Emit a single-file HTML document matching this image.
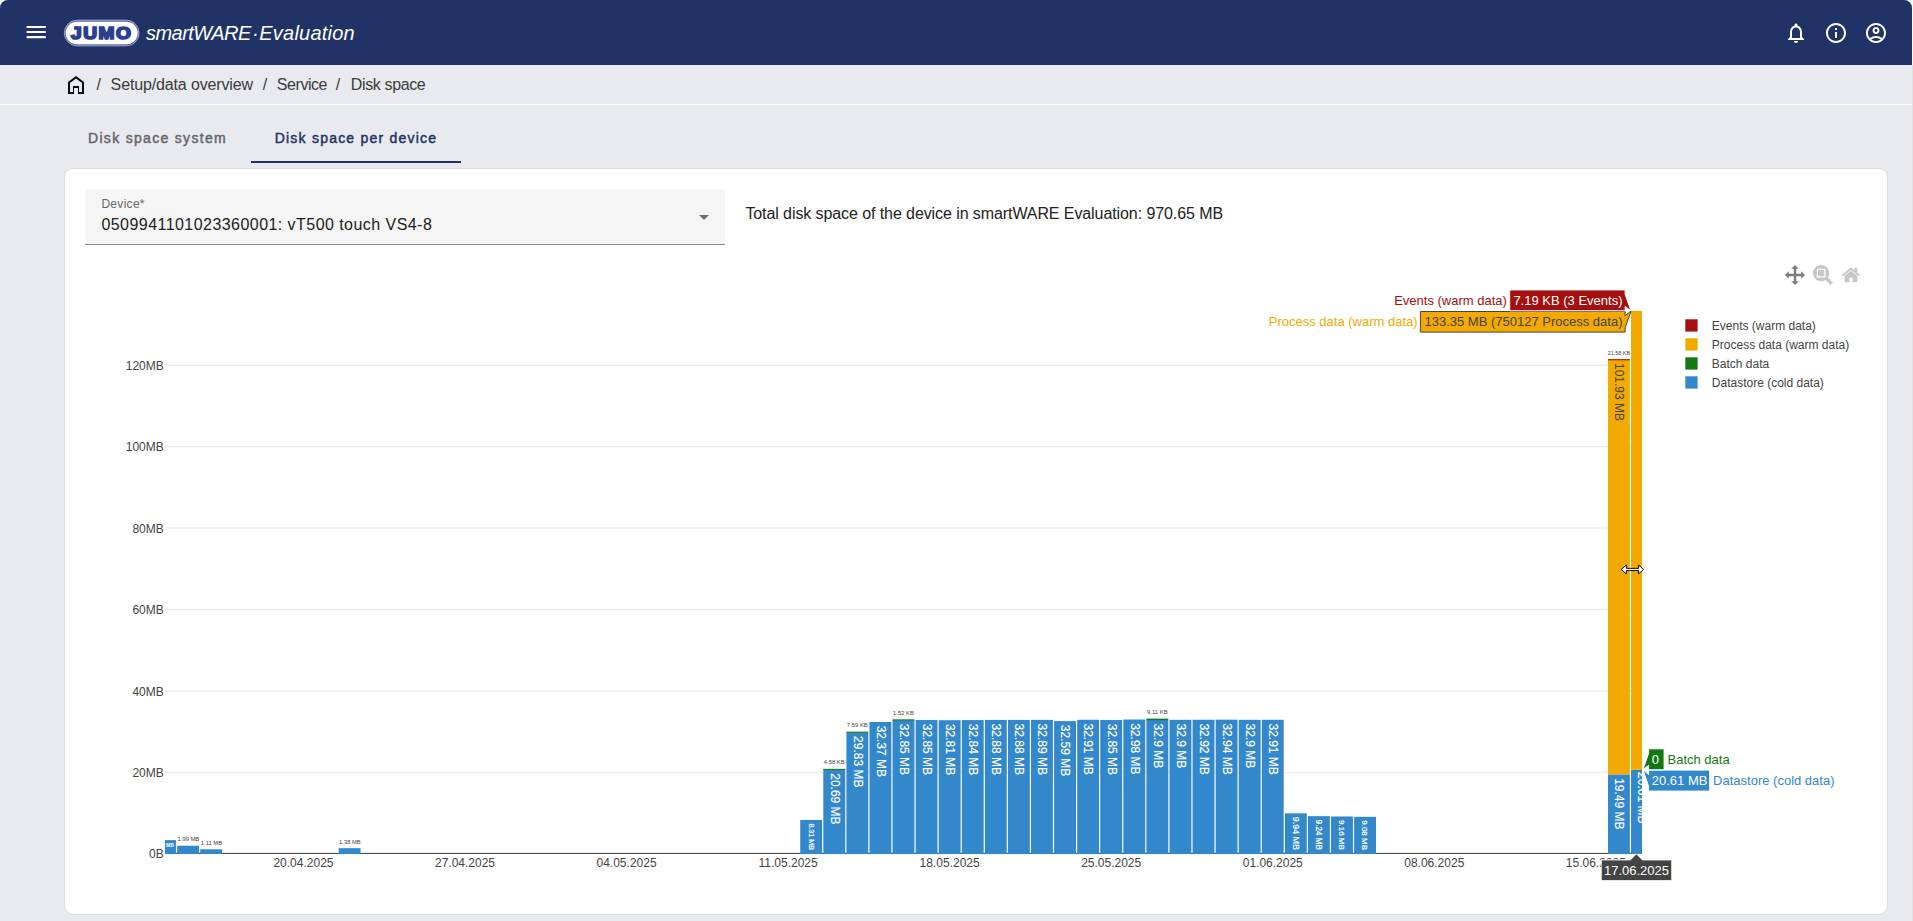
<!DOCTYPE html>
<html lang="en">
<head>
<meta charset="utf-8">
<title>smartWARE Evaluation - Disk space</title>
<style>
  html, body { margin: 0; padding: 0; }
  html { background: #e1e1e1; }
  body {
    width: 1913px; height: 921px; overflow: hidden; position: relative;
    font-family: "Liberation Sans", Arial, sans-serif; color: #222;
    background: linear-gradient(#fafaf8 0, #fafaf8 65px, #e1e1e1 65px);
  }
  #app {
    position: absolute; left: 0; top: 0; width: 1912px; height: 921px;
    background: #e8eaf0; border-radius: 8px 8px 0 0; overflow: hidden;
  }
  .abs { position: absolute; white-space: nowrap; }
  #topbar { position: absolute; left: 0; top: 0; width: 1912px; height: 64.7px; background: #213366; }
  #topbar svg { position: absolute; }
  #crumbs { position: absolute; left: 0; top: 65px; width: 1912px; height: 39px; border-bottom: 1.4px solid #fdfdfe; }
  .crumb { position: absolute; top: 10px; font-size: 16px; line-height: 19px; color: #3b3b3b; white-space: nowrap; transform-origin: 0 50%; }
  .tab { position: absolute; top: 115px; height: 48px; line-height: 47px; font-size: 14px; font-weight: normal; -webkit-text-stroke: 0.45px currentColor; white-space: nowrap; text-align: center; }
  .tab span { display: inline-block; transform-origin: 50% 50%; }
  #card { position: absolute; left: 65px; top: 168.5px; width: 1822.2px; height: 745.6px; background: #fff; border-radius: 8px;
          box-shadow: 0 0 0 0.9px #dcdcdc; }
  #select { position: absolute; left: 85px; top: 189px; width: 640px; height: 55px; background: #f5f5f5; border-radius: 4px 4px 0 0; border-bottom: 1px solid #8c8c8c; }
  svg.chart { position: absolute; left: 65px; top: 169px; }
</style>
</head>
<body>
<div id="app">

  <!-- top bar -->
  <div id="topbar">
    <svg style="left:24px;top:20px" width="24" height="24" viewBox="0 0 24 24"><path fill="#fff" d="M2.600 5.950h19.200v2.100H2.600zM2.600 10.950h19.200v2.100H2.600zM2.600 16.050h19.200v2.100H2.600z"/></svg>
    <!-- JUMO logo -->
    <svg style="left:62px;top:18px" width="80" height="30" viewBox="62 18 80 30">
      <rect x="64.3" y="20.1" width="74.8" height="25.8" rx="12.9" fill="#5a67a6" stroke="#ffffff" stroke-opacity="0.75" stroke-width="0.6"/>
      <rect x="65.7" y="21.7" width="72" height="22.6" rx="11.3" fill="#ffffff"/>
      <g transform="translate(101.7,39.0) scale(1.16,1)"><text id="jumo" x="0" y="0" text-anchor="middle" font-family="'Liberation Sans', Arial, sans-serif" font-weight="bold" font-size="16.5" fill="#2b4091" stroke="#2b4091" stroke-width="1.7" stroke-linejoin="miter" letter-spacing="1.3">JUMO</text></g>
    </svg>
    <div class="abs" id="brand" style="left:146px;top:20.8px;font-size:20px;line-height:24px;font-style:italic;color:#fff;"><span id="b1" style="letter-spacing:-0.54px">smartWARE</span><span id="b2" style="padding:0 0.6px 0 1.2px">·</span><span id="b3" style="letter-spacing:0.23px">Evaluation</span></div>
    <svg style="left:1784px;top:20.5px" width="24" height="24" viewBox="0 0 24 24"><path fill="#fff" d="M12 22c1.1 0 2-.9 2-2h-4c0 1.1.9 2 2 2zm6-6v-5c0-3.07-1.63-5.64-4.5-6.32V4c0-.83-.67-1.500-1.500-1.500s-1.500.67-1.500 1.500v.68C7.640 5.360 6 7.920 6 11v5l-2 2v1h16v-1l-2-2zm-2 1H8v-6c0-2.480 1.510-4.500 4-4.500s4 2.020 4 4.500v6z"/></svg>
    <svg style="left:1824px;top:21px" width="24" height="24" viewBox="0 0 24 24"><path fill="#fff" d="M11 7h2v2h-2zm0 4h2v6h-2zm1-9C6.480 2 2 6.480 2 12s4.480 10 10 10 10-4.480 10-10S17.520 2 12 2zm0 18c-4.410 0-8-3.590-8-8s3.590-8 8-8 8 3.590 8 8-3.590 8-8 8z"/></svg>
    <svg style="left:1864px;top:21px" width="24" height="24" viewBox="0 0 24 24"><path fill="#fff" d="M12 2C6.480 2 2 6.480 2 12s4.480 10 10 10 10-4.480 10-10S17.520 2 12 2zM7.350 18.500C8.660 17.560 10.260 17 12 17s3.340.560 4.650 1.500c-1.310.940-2.910 1.500-4.650 1.500s-3.340-.560-4.650-1.500zm10.790-1.380C16.450 15.800 14.320 15 12 15s-4.450.800-6.140 2.120C4.700 15.730 4 13.950 4 12c0-4.420 3.580-8 8-8s8 3.580 8 8c0 1.950-.700 3.730-1.860 5.120zM12 6c-1.930 0-3.500 1.570-3.500 3.500S10.070 13 12 13s3.500-1.570 3.500-3.500S13.930 6 12 6zm0 5c-.830 0-1.500-.670-1.500-1.500S11.170 8 12 8s1.500.670 1.500 1.500S12.830 11 12 11z"/></svg>
  </div>

  <!-- breadcrumbs -->
  <div id="crumbs">
    <svg style="position:absolute;left:64px;top:7.8px" width="24" height="24" viewBox="0 0 24 24"><path fill="#0a0a0a" d="M6 19h3v-6h6v6h3v-9l-6-4.500L6 10v9zm-2 2V9l8-6 8 6v12h-6v-6h-4v6H4z"/></svg>
    <div class="crumb" style="left:96.4px">/</div>
    <div class="crumb" id="c1" style="left:110.6px;letter-spacing:-0.14px">Setup/data overview</div>
    <div class="crumb" style="left:262.8px">/</div>
    <div class="crumb" id="c2" style="left:276.8px;letter-spacing:-0.44px">Service</div>
    <div class="crumb" style="left:335.8px">/</div>
    <div class="crumb" id="c3" style="left:350.8px;letter-spacing:-0.37px">Disk space</div>
  </div>

  <!-- tabs -->
  <div class="tab" style="left:64px;width:187px;color:#646569;"><span id="t1" style="letter-spacing:1.31px">Disk space system</span></div>
  <div class="tab" style="left:251px;width:210px;color:#213366;"><span id="t2" style="letter-spacing:1.22px">Disk space per device</span></div>
  <div class="abs" style="left:251px;top:161px;width:210px;height:2.1px;background:#213366"></div>

  <!-- card -->
  <div id="card"></div>
  <div id="select">
    <div class="abs" id="lbl" style="left:16.4px;top:8px;font-size:12px;line-height:14px;color:#686868;letter-spacing:0.3px;transform-origin:0 50%">Device*</div>
    <div class="abs" id="val" style="left:16.4px;top:26px;font-size:16px;line-height:19px;color:#212121;letter-spacing:0.45px">0509941101023360001: vT500 touch VS4-8</div>
    <svg style="position:absolute;left:607px;top:16px" width="24" height="24" viewBox="0 0 24 24"><path fill="#707070" d="M7 10l5 5 5-5z"/></svg>
  </div>
  <div class="abs" id="total" style="left:745.4px;top:204px;font-size:16px;line-height:19px;color:#222;letter-spacing:-0.086px">Total disk space of the device in smartWARE Evaluation: 970.65 MB</div>

<svg class="chart" width="1822" height="745" viewBox="65 169 1822 745" font-family="'Liberation Sans', Arial, sans-serif">
<defs><clipPath id="plotclip"><rect x="165.0" y="311.1" width="1477.0" height="542.9"/></clipPath></defs>
<rect x="165.0" y="771.61" width="1477.0" height="1.5" fill="#ececec"/>
<rect x="165.0" y="690.17" width="1477.0" height="1.5" fill="#ececec"/>
<rect x="165.0" y="608.73" width="1477.0" height="1.5" fill="#ececec"/>
<rect x="165.0" y="527.29" width="1477.0" height="1.5" fill="#ececec"/>
<rect x="165.0" y="445.85" width="1477.0" height="1.5" fill="#ececec"/>
<rect x="165.0" y="364.41" width="1477.0" height="1.5" fill="#ececec"/>
<rect x="165.0" y="852.9" width="1477.0" height="1.05" fill="#444444"/>
<g clip-path="url(#plotclip)">
<rect x="154.05" y="840.12" width="21.90" height="13.88" fill="#3388cc"/>
<rect x="177.13" y="845.70" width="21.90" height="8.30" fill="#3388cc"/>
<rect x="200.21" y="849.28" width="21.90" height="4.72" fill="#3388cc"/>
<rect x="338.67" y="848.18" width="21.90" height="5.82" fill="#3388cc"/>
<rect x="800.23" y="819.96" width="21.90" height="34.04" fill="#3388cc"/>
<rect x="823.31" y="769.55" width="21.90" height="84.45" fill="#3388cc"/>
<rect x="823.31" y="768.85" width="21.90" height="1.1" fill="#147814"/>
<rect x="846.39" y="732.33" width="21.90" height="121.67" fill="#3388cc"/>
<rect x="846.39" y="731.63" width="21.90" height="1.1" fill="#147814"/>
<rect x="869.47" y="721.99" width="21.90" height="132.01" fill="#3388cc"/>
<rect x="892.55" y="720.03" width="21.90" height="133.97" fill="#3388cc"/>
<rect x="892.55" y="719.33" width="21.90" height="1.1" fill="#147814"/>
<rect x="915.62" y="720.03" width="21.90" height="133.97" fill="#3388cc"/>
<rect x="938.70" y="720.20" width="21.90" height="133.80" fill="#3388cc"/>
<rect x="961.78" y="720.08" width="21.90" height="133.92" fill="#3388cc"/>
<rect x="984.86" y="719.91" width="21.90" height="134.09" fill="#3388cc"/>
<rect x="1007.94" y="719.91" width="21.90" height="134.09" fill="#3388cc"/>
<rect x="1031.01" y="719.87" width="21.90" height="134.13" fill="#3388cc"/>
<rect x="1054.09" y="721.09" width="21.90" height="132.91" fill="#3388cc"/>
<rect x="1077.17" y="719.79" width="21.90" height="134.21" fill="#3388cc"/>
<rect x="1100.25" y="720.03" width="21.90" height="133.97" fill="#3388cc"/>
<rect x="1123.33" y="719.51" width="21.90" height="134.49" fill="#3388cc"/>
<rect x="1146.40" y="719.83" width="21.90" height="134.17" fill="#3388cc"/>
<rect x="1146.40" y="718.63" width="21.90" height="1.6" fill="#147814"/>
<rect x="1169.48" y="719.83" width="21.90" height="134.17" fill="#3388cc"/>
<rect x="1192.56" y="719.75" width="21.90" height="134.25" fill="#3388cc"/>
<rect x="1215.64" y="719.67" width="21.90" height="134.33" fill="#3388cc"/>
<rect x="1238.72" y="719.83" width="21.90" height="134.17" fill="#3388cc"/>
<rect x="1261.79" y="719.79" width="21.90" height="134.21" fill="#3388cc"/>
<rect x="1284.87" y="813.32" width="21.90" height="40.68" fill="#3388cc"/>
<rect x="1307.95" y="816.17" width="21.90" height="37.83" fill="#3388cc"/>
<rect x="1331.03" y="816.50" width="21.90" height="37.50" fill="#3388cc"/>
<rect x="1354.11" y="816.83" width="21.90" height="37.17" fill="#3388cc"/>
<rect x="1607.96" y="774.44" width="21.90" height="79.56" fill="#3388cc"/>
<rect x="1607.96" y="359.38" width="21.90" height="415.06" fill="#f2a900"/>
<rect x="1607.96" y="359.18" width="21.90" height="1.1" fill="#a50f0f"/>
<rect x="1631.04" y="769.88" width="21.90" height="84.12" fill="#3388cc"/>
<rect x="1631.04" y="306.10" width="21.90" height="463.78" fill="#f2a900"/>
<text x="164.40" y="846.92" font-size="5" fill="#ffffff" text-anchor="middle" font-weight="bold">3.36 MB</text>
<text transform="translate(808.82,836.68) rotate(90)" font-size="7.15" fill="#ffffff" stroke="#ffffff" stroke-width="0.2" text-anchor="middle">8.31 MB</text>
<text transform="translate(830.56,773.25) rotate(90)" font-size="12" fill="#ffffff" stroke="#ffffff" stroke-width="0.15">20.69 MB</text>
<text transform="translate(853.64,736.03) rotate(90)" font-size="12" fill="#ffffff" stroke="#ffffff" stroke-width="0.15">29.83 MB</text>
<text transform="translate(876.72,725.69) rotate(90)" font-size="12" fill="#ffffff" stroke="#ffffff" stroke-width="0.15">32.37 MB</text>
<text transform="translate(899.80,723.73) rotate(90)" font-size="12" fill="#ffffff" stroke="#ffffff" stroke-width="0.15">32.85 MB</text>
<text transform="translate(922.87,723.73) rotate(90)" font-size="12" fill="#ffffff" stroke="#ffffff" stroke-width="0.15">32.85 MB</text>
<text transform="translate(945.95,723.90) rotate(90)" font-size="12" fill="#ffffff" stroke="#ffffff" stroke-width="0.15">32.81 MB</text>
<text transform="translate(969.03,723.78) rotate(90)" font-size="12" fill="#ffffff" stroke="#ffffff" stroke-width="0.15">32.84 MB</text>
<text transform="translate(992.11,723.61) rotate(90)" font-size="12" fill="#ffffff" stroke="#ffffff" stroke-width="0.15">32.88 MB</text>
<text transform="translate(1015.19,723.61) rotate(90)" font-size="12" fill="#ffffff" stroke="#ffffff" stroke-width="0.15">32.88 MB</text>
<text transform="translate(1038.26,723.57) rotate(90)" font-size="12" fill="#ffffff" stroke="#ffffff" stroke-width="0.15">32.89 MB</text>
<text transform="translate(1061.34,724.79) rotate(90)" font-size="12" fill="#ffffff" stroke="#ffffff" stroke-width="0.15">32.59 MB</text>
<text transform="translate(1084.42,723.49) rotate(90)" font-size="12" fill="#ffffff" stroke="#ffffff" stroke-width="0.15">32.91 MB</text>
<text transform="translate(1107.50,723.73) rotate(90)" font-size="12" fill="#ffffff" stroke="#ffffff" stroke-width="0.15">32.85 MB</text>
<text transform="translate(1130.58,723.21) rotate(90)" font-size="12" fill="#ffffff" stroke="#ffffff" stroke-width="0.15">32.98 MB</text>
<text transform="translate(1153.65,723.53) rotate(90)" font-size="12" fill="#ffffff" stroke="#ffffff" stroke-width="0.15">32.9 MB</text>
<text transform="translate(1176.73,723.53) rotate(90)" font-size="12" fill="#ffffff" stroke="#ffffff" stroke-width="0.15">32.9 MB</text>
<text transform="translate(1199.81,723.45) rotate(90)" font-size="12" fill="#ffffff" stroke="#ffffff" stroke-width="0.15">32.92 MB</text>
<text transform="translate(1222.89,723.37) rotate(90)" font-size="12" fill="#ffffff" stroke="#ffffff" stroke-width="0.15">32.94 MB</text>
<text transform="translate(1245.97,723.53) rotate(90)" font-size="12" fill="#ffffff" stroke="#ffffff" stroke-width="0.15">32.9 MB</text>
<text transform="translate(1269.04,723.49) rotate(90)" font-size="12" fill="#ffffff" stroke="#ffffff" stroke-width="0.15">32.91 MB</text>
<text transform="translate(1292.87,833.36) rotate(90)" font-size="8.93" fill="#ffffff" stroke="#ffffff" stroke-width="0.2" text-anchor="middle">9.94 MB</text>
<text transform="translate(1316.20,834.79) rotate(90)" font-size="8.17" fill="#ffffff" stroke="#ffffff" stroke-width="0.2" text-anchor="middle">9.24 MB</text>
<text transform="translate(1339.31,834.95) rotate(90)" font-size="8.08" fill="#ffffff" stroke="#ffffff" stroke-width="0.2" text-anchor="middle">9.16 MB</text>
<text transform="translate(1362.42,835.11) rotate(90)" font-size="7.99" fill="#ffffff" stroke="#ffffff" stroke-width="0.2" text-anchor="middle">9.08 MB</text>
<text transform="translate(1615.21,362.98) rotate(90)" font-size="12" fill="#444444">101.93 MB</text>
<text transform="translate(1615.21,778.14) rotate(90)" font-size="12" fill="#ffffff" stroke="#ffffff" stroke-width="0.15">19.49 MB</text>
<text transform="translate(1638.29,772.08) rotate(90)" font-size="12" fill="#ffffff" stroke="#ffffff" stroke-width="0.15">20.61 MB</text>
</g>
<text x="188.38" y="841.20" font-size="5.8" fill="#444444" text-anchor="middle">1.99 MB</text>
<text x="211.46" y="844.78" font-size="5.8" fill="#444444" text-anchor="middle">1.11 MB</text>
<text x="349.92" y="843.68" font-size="5.8" fill="#444444" text-anchor="middle">1.38 MB</text>
<text x="834.26" y="764.15" font-size="5.9" fill="#444444" text-anchor="middle">4.58 KB</text>
<text x="857.34" y="726.93" font-size="5.9" fill="#444444" text-anchor="middle">7.59 KB</text>
<text x="903.50" y="714.63" font-size="5.9" fill="#444444" text-anchor="middle">1.52 KB</text>
<text x="1157.35" y="714.43" font-size="5.9" fill="#444444" text-anchor="middle">9.11 KB</text>
<text x="1618.91" y="354.98" font-size="5.4" fill="#444444" text-anchor="middle">21.58 KB</text>
<text x="163.8" y="858.20" font-size="12" fill="#444444" text-anchor="end">0B</text>
<text x="163.8" y="776.96" font-size="12" fill="#444444" text-anchor="end">20MB</text>
<text x="163.8" y="695.52" font-size="12" fill="#444444" text-anchor="end">40MB</text>
<text x="163.8" y="614.08" font-size="12" fill="#444444" text-anchor="end">60MB</text>
<text x="163.8" y="532.64" font-size="12" fill="#444444" text-anchor="end">80MB</text>
<text x="163.8" y="451.20" font-size="12" fill="#444444" text-anchor="end">100MB</text>
<text x="163.8" y="369.76" font-size="12" fill="#444444" text-anchor="end">120MB</text>
<text x="303.47" y="866.9" font-size="12" fill="#444444" text-anchor="middle">20.04.2025</text>
<text x="465.01" y="866.9" font-size="12" fill="#444444" text-anchor="middle">27.04.2025</text>
<text x="626.56" y="866.9" font-size="12" fill="#444444" text-anchor="middle">04.05.2025</text>
<text x="788.11" y="866.9" font-size="12" fill="#444444" text-anchor="middle">11.05.2025</text>
<text x="949.65" y="866.9" font-size="12" fill="#444444" text-anchor="middle">18.05.2025</text>
<text x="1111.20" y="866.9" font-size="12" fill="#444444" text-anchor="middle">25.05.2025</text>
<text x="1272.74" y="866.9" font-size="12" fill="#444444" text-anchor="middle">01.06.2025</text>
<text x="1434.29" y="866.9" font-size="12" fill="#444444" text-anchor="middle">08.06.2025</text>
<text x="1595.84" y="866.9" font-size="12" fill="#444444" text-anchor="middle">15.06.2025</text>
<rect x="1685.3" y="319.3" width="12.3" height="12.3" fill="#a50f0f"/>
<text x="1711.8" y="329.9" font-size="12" fill="#444444">Events (warm data)</text>
<rect x="1685.3" y="338.3" width="12.3" height="12.3" fill="#f2a900"/>
<text x="1711.8" y="348.9" font-size="12" fill="#444444">Process data (warm data)</text>
<rect x="1685.3" y="357.3" width="12.3" height="12.3" fill="#147814"/>
<text x="1711.8" y="367.9" font-size="12" fill="#444444">Batch data</text>
<rect x="1685.3" y="376.3" width="12.3" height="12.3" fill="#3388cc"/>
<text x="1711.8" y="386.9" font-size="12" fill="#444444">Datastore (cold data)</text>
<g transform="translate(1785,265) scale(0.02)"><path fill="#7c7c7c" transform="matrix(1 0 0 -1 0 850)" d="m1000 350l-187 188 0-125-250 0 0 250 125 0-188 187-187-187 125 0 0-250-250 0 0 125-188-188 186-187 0 125 252 0 0-250-125 0 187-188 188 188-125 0 0 250 250 0 0-126 187 188z"/></g>
<g transform="translate(1813,265) scale(0.02)"><path fill="#c7c7c7" transform="matrix(1 0 0 -1 0 850)" d="m1000-25l-250 251c40 63 63 138 63 218 0 224-182 406-407 406-224 0-406-182-406-406s183-406 407-406c80 0 155 22 218 62l250-250 125 125z m-812 250l0 438 437 0 0-438-437 0z m62 375l313 0 0-312-313 0 0 312z"/></g>
<g transform="translate(1841.7,265) scale(0.02)"><path fill="#c7c7c7" transform="matrix(1 0 0 -1 0 850)" d="m786 296v-267q0-15-11-26t-25-10h-214v214h-143v-214h-214q-15 0-25 10t-11 26v267q0 1 0 2t0 2l321 264 321-264q1-1 1-4z m124 39l-34-41q-5-5-12-6h-2q-7 0-12 3l-386 322-386-322q-7-4-13-4-7 2-12 7l-35 41q-4 5-3 13t6 12l401 334q18 15 42 15t43-15l136-114v109q0 8 5 13t13 5h107q8 0 13-5t5-13v-227l122-102q5-5 6-12t-4-13z"/></g>
<path d="M1631.1,311.0 L1625.1,327.8 V332.1 H1420.4 V311.5 H1625.1 V315.8 Z" fill="#f2a900" stroke="#444444" stroke-width="1"/>
<text x="1622.5" y="326.4" font-size="13" fill="#444444" text-anchor="end">133.35 MB (750127 Process data)</text>
<text x="1417.6" y="326.4" font-size="13" fill="#f2a900" text-anchor="end">Process data (warm data)</text>
<path d="M1631.1,311.0 L1625.1,306.4 V310.8 H1509.7 V289.9 H1625.1 V294.4 Z" fill="#a50f0f" stroke="#ffffff" stroke-width="1"/>
<text x="1622.5" y="305.0" font-size="13" fill="#ffffff" text-anchor="end">7.19 KB (3 Events)</text>
<text x="1506.9" y="305.0" font-size="13" fill="#a50f0f" text-anchor="end">Events (warm data)</text>
<path d="M1643.0,769.6 L1648.6,786.6 V791.1 H1709.7 V770.1 H1648.6 V774.6 Z" fill="#3388cc" stroke="#ffffff" stroke-width="1"/>
<text x="1651.8" y="785.2" font-size="13" fill="#ffffff">20.61 MB</text>
<text x="1713.1" y="785.2" font-size="13" fill="#3388cc">Datastore (cold data)</text>
<path d="M1643.0,769.6 L1648.6,765.3 V769.8 H1664.1 V748.8 H1648.6 V753.3 Z" fill="#147814" stroke="#ffffff" stroke-width="1"/>
<text x="1651.8" y="763.9" font-size="13" fill="#ffffff">0</text>
<text x="1667.5" y="763.9" font-size="13" fill="#147814">Batch data</text>
<path d="M1636.4,853.8 L1642.4,859.9 H1671.8 V880.7 H1601.2 V859.9 H1630.4 Z" fill="#444444" stroke="#ffffff" stroke-width="1"/>
<text x="1636.5" y="875" font-size="13" fill="#ffffff" text-anchor="middle">17.06.2025</text>
<g transform="translate(1632.45,569.45)"><path d="M-11.2,0 L-6.1,-4.4 V-1.1 H6.1 V-4.4 L11.2,0 L6.1,4.4 V1.1 H-6.1 V4.4 Z" fill="#ffffff" stroke="#0a0a14" stroke-width="1" stroke-linejoin="round"/></g>
</svg>

</div>
</body>
</html>
